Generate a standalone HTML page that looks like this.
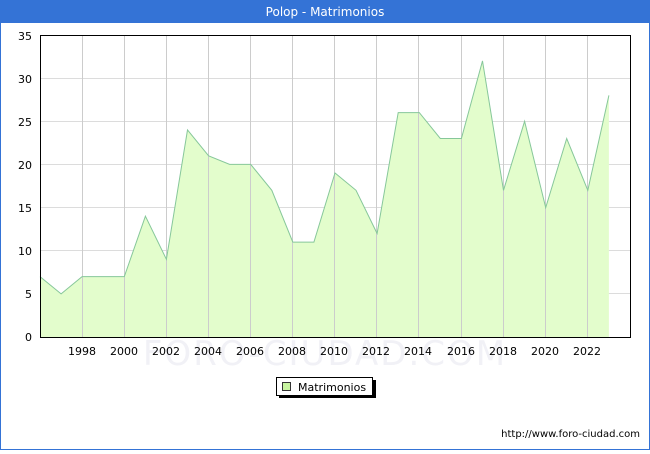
<!DOCTYPE html>
<html><head><meta charset="utf-8"><style>
html,body{margin:0;padding:0;background:#fff;}
body{width:650px;height:450px;overflow:hidden;font-family:"DejaVu Sans","Liberation Sans",sans-serif;}
</style></head><body>
<svg width="650" height="450" xmlns="http://www.w3.org/2000/svg" font-family="DejaVu Sans, Liberation Sans, sans-serif">
<rect x="0.5" y="0.5" width="649" height="449" fill="#fff" stroke="#3473d6"/>
<rect x="0" y="0" width="650" height="23" fill="#3473d6"/>
<text x="325" y="16" fill="#fff" font-size="12" text-anchor="middle">Polop - Matrimonios</text>
<text x="325" y="365" fill="#f1f1f6" font-size="34" text-anchor="middle" letter-spacing="2">FORO-CIUDAD.COM</text>
<g stroke="#dcdcdc" stroke-width="1">
<line x1="40" y1="293.5" x2="630" y2="293.5"/><line x1="40" y1="250.5" x2="630" y2="250.5"/><line x1="40" y1="207.5" x2="630" y2="207.5"/><line x1="40" y1="164.5" x2="630" y2="164.5"/><line x1="40" y1="121.5" x2="630" y2="121.5"/><line x1="40" y1="78.5" x2="630" y2="78.5"/>
</g>
<polygon fill="#e3fdcc" points="40,337 40,276.6 61.1,293.9 82.1,276.6 103.2,276.6 124.3,276.6 145.4,216.2 166.4,259.3 187.5,129.9 208.6,155.8 229.6,164.4 250.7,164.4 271.8,190.3 292.8,242.1 313.9,242.1 335,173 356,190.3 377.1,233.5 398.2,112.6 419.3,112.6 440.3,138.5 461.4,138.5 482.5,60.9 503.5,190.3 524.6,121.3 545.7,207.6 566.7,138.5 587.8,190.3 608.9,95.4 608.9,337"/>
<g stroke="#cccccc" stroke-width="1">
<line x1="82.5" y1="35" x2="82.5" y2="337"/><line x1="124.5" y1="35" x2="124.5" y2="337"/><line x1="166.5" y1="35" x2="166.5" y2="337"/><line x1="208.5" y1="35" x2="208.5" y2="337"/><line x1="250.5" y1="35" x2="250.5" y2="337"/><line x1="292.5" y1="35" x2="292.5" y2="337"/><line x1="334.5" y1="35" x2="334.5" y2="337"/><line x1="376.5" y1="35" x2="376.5" y2="337"/><line x1="418.5" y1="35" x2="418.5" y2="337"/><line x1="461.5" y1="35" x2="461.5" y2="337"/><line x1="503.5" y1="35" x2="503.5" y2="337"/><line x1="545.5" y1="35" x2="545.5" y2="337"/><line x1="587.5" y1="35" x2="587.5" y2="337"/>
</g>
<polyline fill="none" stroke="#86c79a" stroke-width="1" points="40,276.6 61.1,293.9 82.1,276.6 103.2,276.6 124.3,276.6 145.4,216.2 166.4,259.3 187.5,129.9 208.6,155.8 229.6,164.4 250.7,164.4 271.8,190.3 292.8,242.1 313.9,242.1 335,173 356,190.3 377.1,233.5 398.2,112.6 419.3,112.6 440.3,138.5 461.4,138.5 482.5,60.9 503.5,190.3 524.6,121.3 545.7,207.6 566.7,138.5 587.8,190.3 608.9,95.4"/>
<rect x="40.5" y="35.5" width="590" height="302" fill="none" stroke="#000"/>
<g font-size="11" fill="#000" text-anchor="end">
<text x="32" y="341">0</text><text x="32" y="298">5</text><text x="32" y="255">10</text><text x="32" y="212">15</text><text x="32" y="169">20</text><text x="32" y="126">25</text><text x="32" y="83">30</text><text x="32" y="40">35</text>
</g>
<g font-size="11" fill="#000" text-anchor="middle">
<text x="82" y="355">1998</text><text x="124" y="355">2000</text><text x="166" y="355">2002</text><text x="208" y="355">2004</text><text x="250" y="355">2006</text><text x="292" y="355">2008</text><text x="334" y="355">2010</text><text x="376" y="355">2012</text><text x="418" y="355">2014</text><text x="461" y="355">2016</text><text x="503" y="355">2018</text><text x="545" y="355">2020</text><text x="587" y="355">2022</text>
</g>
<rect x="279" y="380" width="97" height="18" fill="#000"/>
<rect x="276.5" y="377.5" width="96" height="18" fill="#fff" stroke="#000"/>
<rect x="282.5" y="382.5" width="8" height="8" fill="#c8f5a0" stroke="#333"/>
<text x="298" y="391" font-size="11" fill="#000">Matrimonios</text>
<text x="640" y="437" font-size="10" fill="#000" text-anchor="end">http://www.foro-ciudad.com</text>
</svg>
</body></html>
